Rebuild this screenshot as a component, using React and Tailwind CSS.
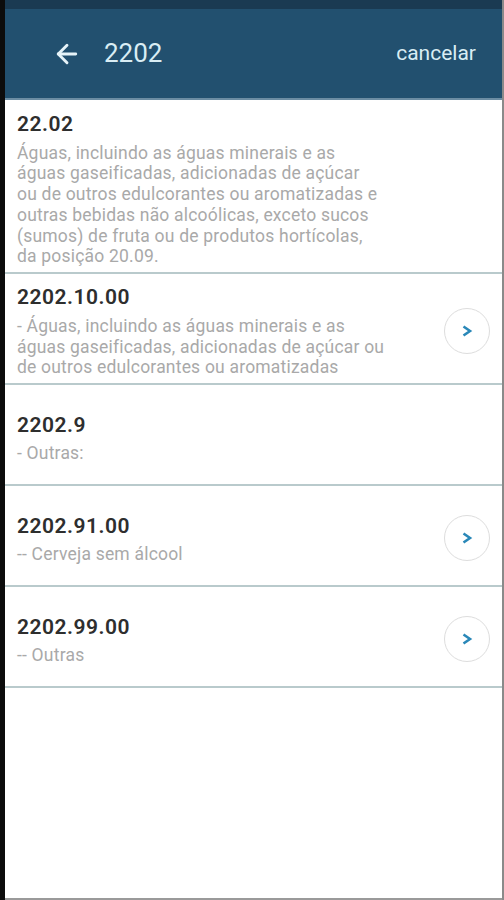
import { ArrowLeft } from 'lucide-react';

const items = [
  {
    code: '22.02',
    desc: 'Águas, incluindo as águas minerais e as águas gaseificadas, adicionadas de açúcar ou de outros edulcorantes ou aromatizadas e outras bebidas não alcoólicas, exceto sucos (sumos) de fruta ou de produtos hortícolas, da posição 20.09.',
    arrow: false,
  },
  {
    code: '2202.10.00',
    desc: '- Águas, incluindo as águas minerais e as águas gaseificadas, adicionadas de açúcar ou de outros edulcorantes ou aromatizadas',
    arrow: true,
  },
  { code: '2202.9', desc: '- Outras:', arrow: false },
  { code: '2202.91.00', desc: '-- Cerveja sem álcool', arrow: true },
  { code: '2202.99.00', desc: '-- Outras', arrow: true },
];

function Row({ item, first }) {
  const short = item.desc.length < 30;
  return (
    <div
      className={`flex items-center border-b-2 border-[#b9cacc] pl-3 pr-3 pb-[5px] ${
        first ? 'pt-[10px]' : 'pt-[9px]'
      } ${short ? 'min-h-[101px] pt-[10px]' : ''}`}
    >
      <div className="flex-1 min-w-0">
        <div className="text-[21px] leading-[28px] font-semibold tracking-[0.5px] text-[#2e2e2e]">{item.code}</div>
        <div
          className={`${first ? 'w-[366px]' : 'w-[374px]'} text-[17.5px] leading-[20.8px] tracking-[0.2px] text-[#a9a9a9] mt-[4.5px]`}
        >
          {item.desc}
        </div>
      </div>
      {item.arrow && (
        <div className="w-[46px] h-[46px] rounded-full border-[1.5px] border-[#dddddd] flex items-center justify-center shrink-0">
          <svg width="12" height="14" viewBox="0 0 12 14" fill="none">
            <polyline points="2.5,2.5 9,7 2.5,11.5" stroke="#2a88b8" strokeWidth="2.6" strokeLinejoin="miter" />
          </svg>
        </div>
      )}
    </div>
  );
}

export default function App() {
  return (
    <div className="w-[504px] h-[900px] flex bg-[#111] overflow-hidden" style={{ fontFamily: 'Roboto, "Noto Sans", sans-serif' }}>
      <div className="w-[5px] bg-[#0c0c0c]" />
      <div className="flex-1 flex flex-col bg-white">
        <div className="h-[9px] bg-[#1a3a52]" />
        <div className="h-[89px] bg-[#22506f] flex items-center pl-[47px] pr-[26px]">
          <ArrowLeft size={30} strokeWidth={2.3} className="text-[#e6f3f8]" />
          <div className="ml-[22px] text-[26px] text-[#d9edf4] flex-1">2202</div>
          <div className="text-[21px] text-[#d9edf4]">cancelar</div>
        </div>
        <div className="h-[2px] bg-[#6c8da3]" />
        <div className="flex-1 flex flex-col">
          {items.map((it, i) => (
            <Row key={it.code} item={it} first={i === 0} />
          ))}
        </div>
        <div className="h-[2px] bg-[#9a9a9a]" />
      </div>
      <div className="w-[2px] bg-[#8a8a8a]" />
    </div>
  );
}
